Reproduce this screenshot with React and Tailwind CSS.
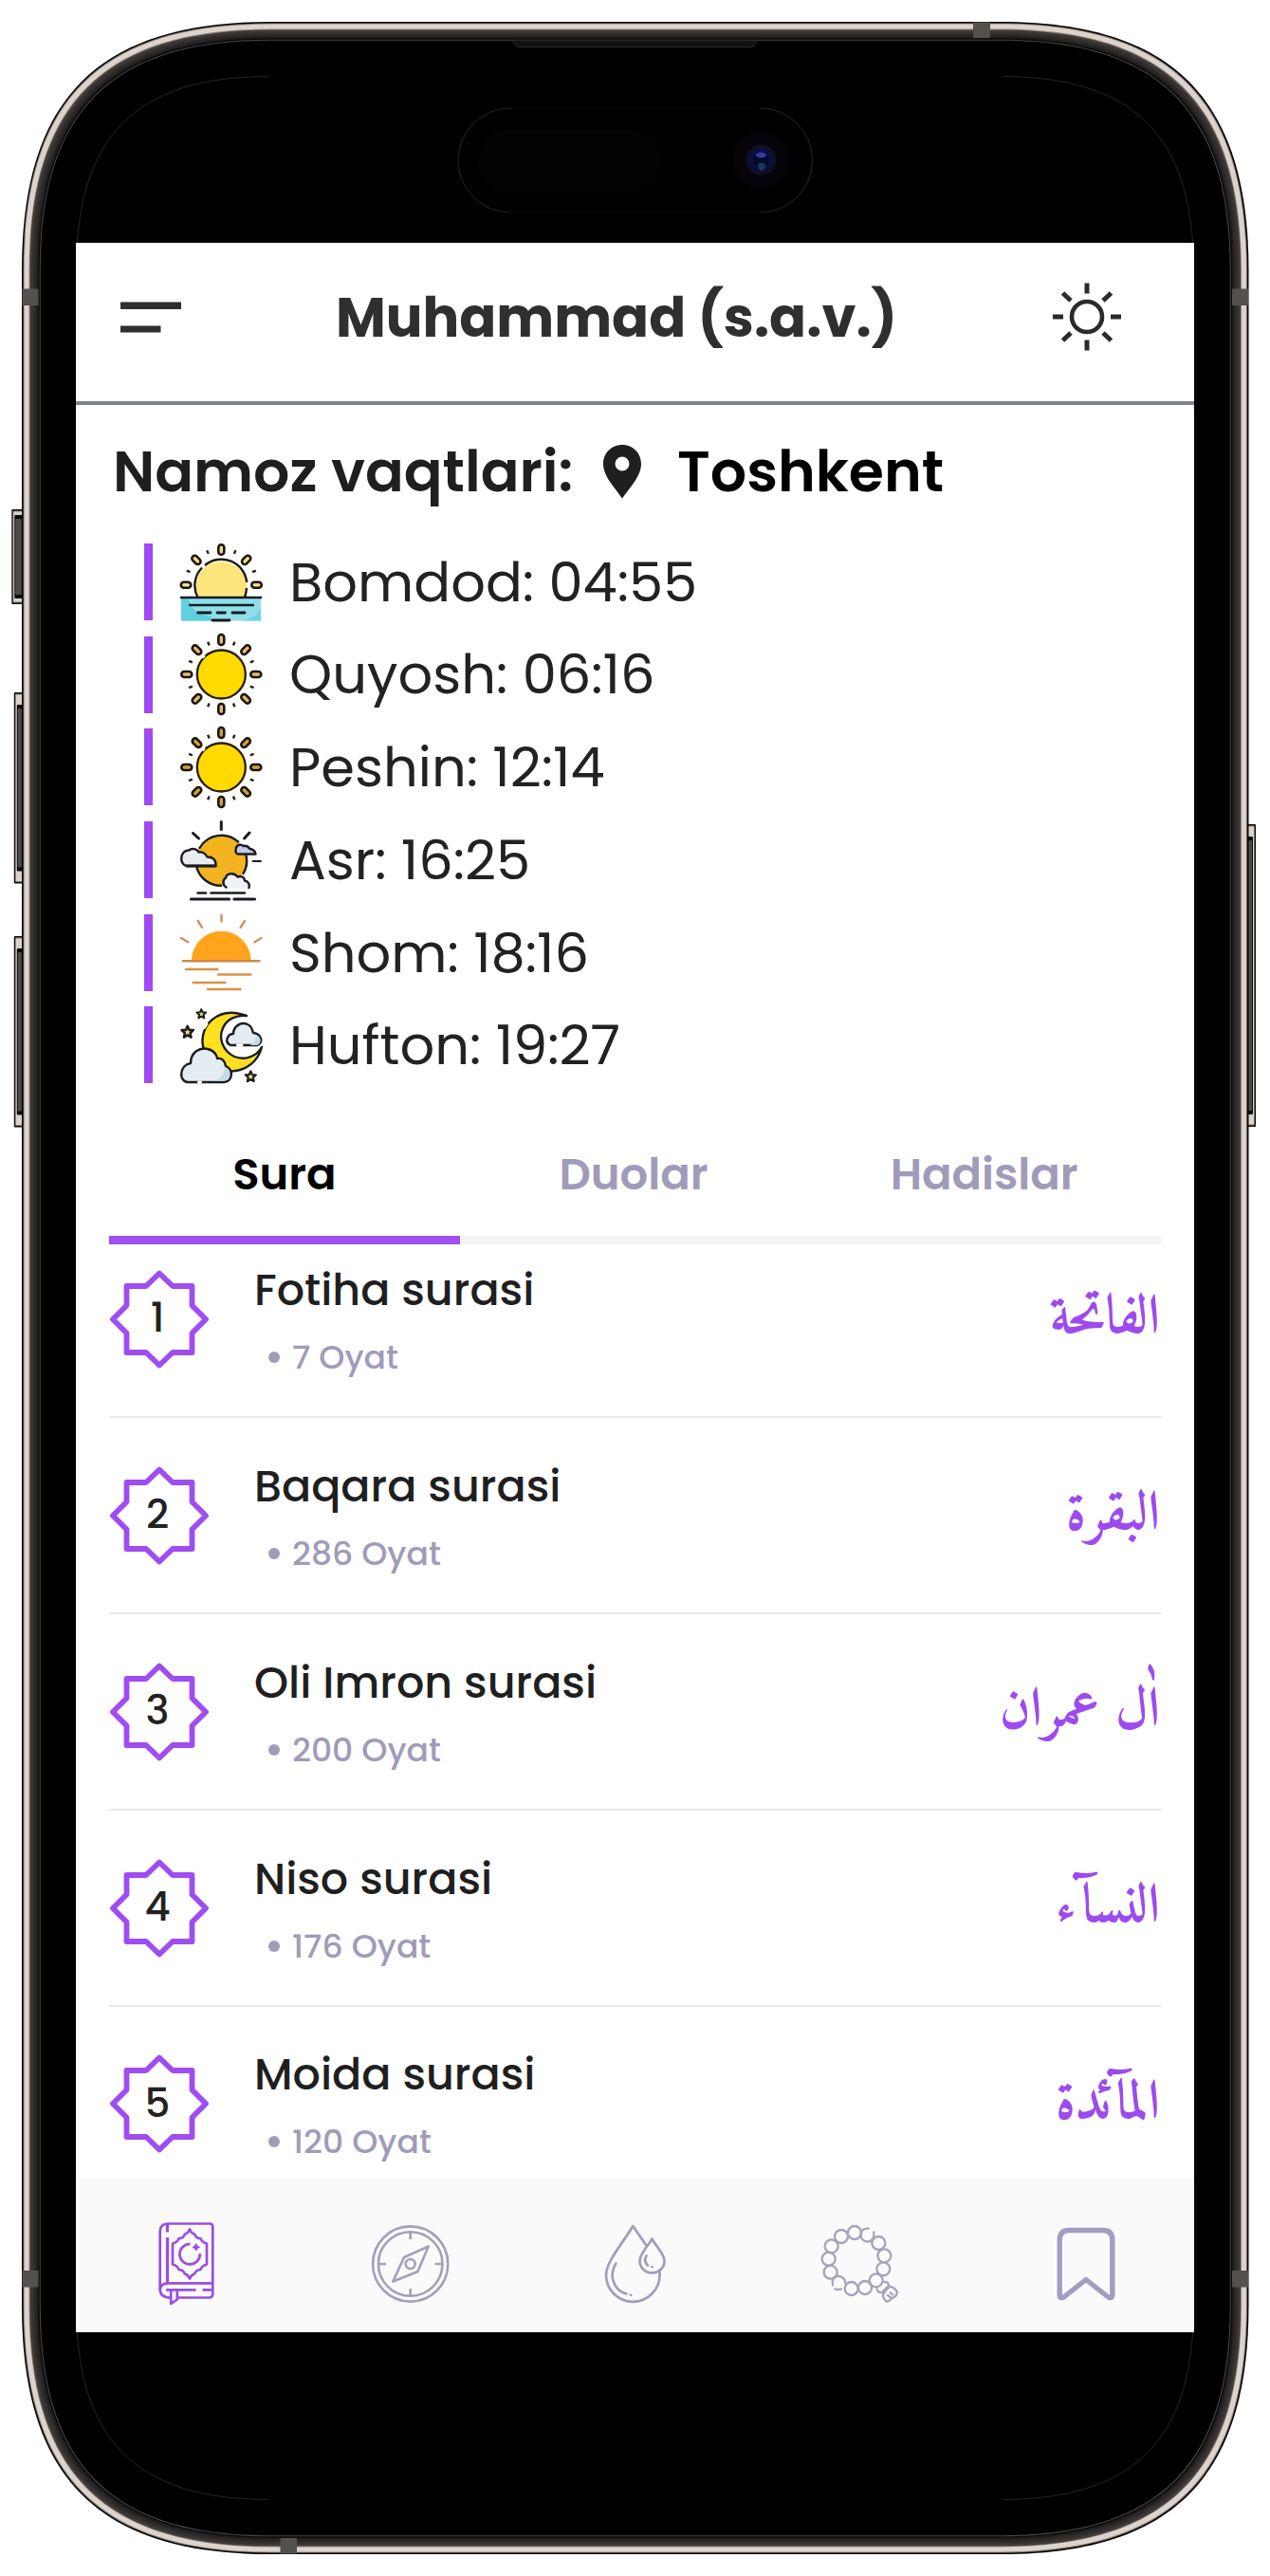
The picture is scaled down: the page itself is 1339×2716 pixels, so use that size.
import React from "react";

const PRAYERS = [
  { label: "Bomdod: 04:55", icon: "dawn" },
  { label: "Quyosh: 06:16", icon: "sun" },
  { label: "Peshin: 12:14", icon: "noon" },
  { label: "Asr: 16:25", icon: "cloudy" },
  { label: "Shom: 18:16", icon: "sunset" },
  { label: "Hufton: 19:27", icon: "night" },
];

const SURAS = [
  { n: 1, name: "Fotiha surasi", verses: "7 Oyat", arabic: "الفاتحة" },
  { n: 2, name: "Baqara surasi", verses: "286 Oyat", arabic: "البقرة" },
  { n: 3, name: "Oli Imron surasi", verses: "200 Oyat", arabic: "اٰل عمران" },
  { n: 4, name: "Niso surasi", verses: "176 Oyat", arabic: "النسآء" },
  { n: 5, name: "Moida surasi", verses: "120 Oyat", arabic: "المآئدة" },
];

/* Continuous-corner rectangle, as used for the device body. */
function squircle(x0, y0, x1, y1, r) {
  const a = r * 0.692;
  return [
    `M${x0 + r} ${y0}H${x1 - r}`,
    `c${a} 0 ${r} ${r - a} ${r} ${r}`,
    `V${y1 - r}`,
    `c0 ${a} ${a - r} ${r} ${-r} ${r}`,
    `H${x0 + r}`,
    `c${-a} 0 ${-r} ${a - r} ${-r} ${-r}`,
    `V${y0 + r}`,
    `c0 ${-a} ${r - a} ${-r} ${r} ${-r}z`,
  ].join("");
}
const body = (i) => squircle(23 + i, 23 + i, 1316.5 - i, 2693 - i, 262 - i);

function SideButton({ x, y, w, h, flip }) {
  const e = flip ? x + w : x;
  const s = flip ? -1 : 1;
  const r = (a, b, top, c) => (
    <rect x={Math.min(e + s * a, e + s * b)} y={y + top} width={b - a} height={h - top * 2} fill={c} rx="1" />
  );
  return (
    <g>
      {r(0, w, 0, "#0b0a0a")}
      {r(1.2, w, 1.5, "#8b8078")}
      {r(2, w, 2.5, "#dcd2ca")}
      {r(3, w, w > 10 ? 6 : 13, "#0a0909")}
      {r(4, w - 1, w > 10 ? 10 : 17, "#4f4b49")}
    </g>
  );
}

function PhoneFrame() {
  return (
    <svg className="absolute inset-0" width="1339" height="2716" viewBox="0 0 1339 2716" fill="none">
      <SideButton x={12.3} y={537} w={11.5} h={100} />
      <SideButton x={14.8} y={730} w={9} h={201.5} />
      <SideButton x={14.8} y={987} w={9} h={201.5} />
      <SideButton x={1315} y={869} w={9} h={319} flip />
      <path d={body(0)} fill="#050505" />
      <path d={body(1.6)} fill="#8a8079" />
      <path d={body(2.6)} fill="#dcd3cc" />
      <path d={body(7.6)} fill="#8f857d" />
      <path d={body(8.4)} fill="#423d3a" />
      <path d={body(10.5)} fill="#35312f" />
      <path d={body(13)} fill="#2b2827" />
      <path d={body(15.5)} fill="#1f1d1c" />
      <path d={body(17.5)} fill="#050505" />
      <path d={body(18.7)} fill="#474747" />
      <path d={body(19.8)} fill="#000" />
      <g fill="#53504e">
        <path d="M23.500 304.500h17v17.500h-17zM1299 304.500h17v17.500h-17z" />
        <path d="M23.500 2394h17v17.500h-17zM1299 2394h17v17.500h-17z" />
        <path d="M1026 23.500h18v16.500h-18zM295.500 2676h17.500v16.500h-17.500z" />
      </g>
      <path d="M541 42.500H798l-2 4q-1 3-4 3H547q-3 0-4-3z" fill="#111" stroke="#2b2b2b" strokeWidth="1" />
      <path d={squircle(80.5, 80.5, 1258.5, 2635.5, 204)} stroke="#363636" strokeWidth="0.700" />
      <path d="M282 78H1058V83H282zM282 2633H1058V2638H282z" fill="#000" />
      <path d="M540 114H538A55 55 0 0 0 538 224M801.500 114A55 55 0 0 1 801.500 224" stroke="#3a3a3a" strokeWidth="0.700" />
      <path d="M540 114H800M540 224H800" stroke="#0c0c0c" strokeWidth="0.700" />
      <rect x="503.500" y="136" width="194" height="66" rx="33" fill="#030303" />
      <circle cx="802.400" cy="168.600" r="30" fill="#060408" />
      <circle cx="802.400" cy="168.600" r="16" fill="#0e1124" />
      <circle cx="802.400" cy="168.600" r="12" fill="#0b0e4a" />
      <circle cx="802.400" cy="168.600" r="8.500" fill="#070a26" />
      <ellipse cx="802.400" cy="163.500" rx="5.500" ry="3" fill="#353a9c" />
      <ellipse cx="803" cy="175" rx="4" ry="3.200" fill="#0e4058" />
      <ellipse cx="803" cy="178.500" rx="2.500" ry="1.200" fill="#4c1a6a" />
    </svg>
  );
}

function MenuIcon() {
  return (
    <svg width="64" height="33" viewBox="0 0 64 33" fill="#2f2f2f">
      <rect y="0.500" width="64" height="7.500" />
      <rect y="25.500" width="42.500" height="7" />
    </svg>
  );
}

function ThemeIcon() {
  return (
    <svg width="74" height="74" viewBox="-37 -37 74 74" fill="none" stroke="#2b2b2b" strokeLinecap="round">
      <circle r="16" strokeWidth="4.600" />
      <path
        strokeWidth="5"
        strokeLinecap="butt"
        d="M0-35.500V-24.500M0 35.500V24.500M-36 0H-25M36 0H25M-25.500-25l8.500 8M25.500-25l-8.500 8M-25.500 25l8.500-8M25.500 25l-8.500-8"
      />
    </svg>
  );
}

function PinIcon() {
  return (
    <svg className="ml-[33px]" width="40" height="57" viewBox="0 0 40 57">
      <path
        fill="#1f1f1f"
        fillRule="evenodd"
        d="M20 0C9 0 0 8.500 0 20C0 33 12 45 20 56.500C28 45 40 33 40 20C40 8.500 31 0 20 0ZM20 12.500a7.500 7.500 0 0 1 0 15a7.500 7.500 0 0 1 0-15Z"
      />
    </svg>
  );
}

function Rays({ angles, from, to, fill }) {
  return angles.map((a) => (
    <rect
      key={a}
      x="-3"
      y={-to + 1}
      width="6"
      height={to - from - 2}
      rx="3"
      fill={fill}
      stroke="#1c1608"
      strokeWidth="2.600"
      transform={`rotate(${a})`}
    />
  ));
}

function Ticks({ angles, from, to }) {
  return angles.map((a) => (
    <path key={a} d={`M0 ${-from}V${-to}`} stroke="#26231a" strokeWidth="2.400" transform={`rotate(${a})`} />
  ));
}

function FullSun({ ray }) {
  return (
    <g transform="translate(43.300 43)">
      <circle r="25.500" fill="#ffda00" stroke="#2a1c0a" strokeWidth="2.300" />
      <path d="M-20-17.500l2.500-2.500" stroke="#fff" strokeWidth="2.500" />
      <Rays angles={[0, 45, 90, 135, 180, 225, 270, 315]} from={30} to={43} fill={ray} />
      <Ticks angles={[22.5, 67.5, 112.5, 157.5, 202.5, 247.5, 292.5, 337.5]} from={33} to={37} />
    </g>
  );
}

const STAR =
  "M0-6.500L1.900-2.200L6.500-2L3 1.300L4 6L0 3.600L-4 6L-3 1.300L-6.500-2L-1.900-2.200Z";

function PrayerIcon({ name }) {
  return (
    <svg className="ml-[29px] shrink-0 overflow-visible" width="86" height="86" viewBox="0 0 86 86" fill="none">
      {name === "dawn" && (
        <g>
          <path d="M1 59H85V83.500H1z" fill="#8fdfea" />
          <path d="M1 59H9C11 72 17 76 33 79V83.500H1z" fill="#5fd0e2" />
          <path d="M66 83.500Q80 80 85 70V83.500z" fill="#6cd6e6" />
          <path d="M18.500 59A27 27 0 1 1 68 59Z" fill="#fde57c" />
          <path d="M18.500 59A27 27 0 0 1 23 27.500M26 25A27 27 0 0 1 70.200 43M70 49Q69.500 55 68 59" stroke="#1b1b1b" strokeWidth="2.400" />
          <path d="M0 59H86M9 67H78" stroke="#141c20" strokeWidth="2.500" />
          <path d="M18.500 75H32M39 75H47.500M55 75H68M34 83H52" stroke="#141c20" strokeWidth="2.800" strokeLinecap="round" />
          <g transform="translate(43.300 45.700)">
            <Rays angles={[-90, -45, 0, 45, 90]} from={31} to={43.5} fill="#f0dd8a" />
            <Ticks angles={[-67.5, -22.5, 22.5, 67.5]} from={35.5} to={39.5} />
          </g>
        </g>
      )}
      {name === "sun" && <FullSun ray="#e3bd72" />}
      {name === "noon" && <FullSun ray="#cfa03c" />}
      {name === "cloudy" && (
        <g stroke="#191c22" strokeWidth="2.400" strokeLinecap="round" strokeLinejoin="round">
          <circle cx="43.300" cy="43.300" r="26.500" fill="#f2b41f" stroke="none" />
          <path d="M20.500 30A26.500 26.500 0 0 1 61 23.500M69.500 38A26.500 26.500 0 0 1 66.500 57M43 69.800A26.500 26.500 0 0 1 17 49" />
          <path d="M43.300 2.500V10.500M13.500 14.500L19.500 20M73 14L67.500 20" strokeWidth="3" />
          <path d="M76.500 44H85" strokeWidth="1.800" />
          <path d="M7 49H37.500C38 42 34 39.500 28.500 39.500C26 35 23.500 34 19.500 34.500C18 30.500 12 30 9 32.500C-1 33 -1 48 7 49Z" fill="#e9edf2" />
          <path d="M7 49H37" strokeWidth="3.200" />
          <path d="M61.500 36.500H79.500C79 32.500 76.500 31.500 73.500 31C71 27.500 68.500 27.500 66.500 28C63 25 58.500 27.500 58.800 31.500C57.500 34.500 59.500 36.500 61.500 36.500Z" fill="#c3c9e6" />
          <path d="M50 72.500C45 70 44 64 48 61.500C49 56.500 57 55.500 60.500 60.500C65 59 68 61.500 68 64.500C73 65.500 75 70 72 73Z" fill="#eef1f6" stroke="none" />
          <path d="M48.500 71.500C44.500 69 44.500 64 48 61.500C49 56.500 57 55.500 60.500 60.500C65 59 68 61.500 68 64.500C72 65.500 73.500 68.500 72.500 72" />
          <path d="M18.500 77.500H27M32.500 77.500H68" strokeWidth="2.600" />
          <path d="M11.500 84H51.500M57 84H78.500" strokeWidth="3.200" />
        </g>
      )}
      {name === "sunset" && (
        <g stroke="#dc9147" strokeWidth="2.400" strokeLinecap="round">
          <path d="M12 52A31.300 31.300 0 0 1 74.600 52Z" fill="#ffa41c" stroke="none" />
          <path d="M3 52.300H83.500" stroke="#c98a4a" />
          <path d="M6 61H39.500M40 66.500H74.500M13.500 75H47.500M29 82H63.500" />
          <path d="M43.500 4V10.500M18.800 10L23 16.800M68 10L63.500 16.800M1 28L8.200 32.300M85.500 28L78.500 32.300" stroke="#cf9255" />
        </g>
      )}
      {name === "night" && (
        <g stroke="#1a1c20" strokeWidth="2.400" strokeLinecap="round" strokeLinejoin="round">
          <path d="M70 12C40 1 20 22 24 44C27 62 40 71 54 70.500C70 70 82 60 86 45C79 57 66 58.500 57 55C45 49 40 36 45 25C49 15 60 11 70 12Z" fill="#ffe020" />
          <path d="M25.500 24.500l2.500-4" stroke="#fff" strokeWidth="3" />
          <path d="M53 43C46 40 50 31 56 31C56 23 64 18 71 21C76 23 76 28 77 30C86 31 88 41 81 43Z" fill="#e2ecf1" />
          <path d="M73 43C78 41 80 37 80 32C86 34 86 42 81 43Z" fill="#c4dae6" stroke="none" />
          <path d="M60.500 43H65" stroke="#fff" strokeWidth="3" />
          <path d="M8 82C-2 81 -1 64 11 62C11 50 21 45 29 47C37 49 39 55 39 57C45 56 47 60 48 65C57 69 55 82 46 82Z" fill="#e4edf2" />
          <path d="M36 80.500C44 78 47 72 47 66C54 70 54 80 46 80.500Z" fill="#c4dae6" stroke="none" />
          <path d="M19.500 82H21.500" stroke="#fff" strokeWidth="3.200" />
          <g fill="#f3d878" strokeWidth="2.600">
            <path d={STAR} transform="translate(22.300 10) scale(.75)" />
            <path d={STAR} transform="translate(7.700 29) scale(.95)" />
            <path d={STAR} transform="translate(74.300 76) scale(.85)" />
          </g>
        </g>
      )}
    </svg>
  );
}

function StarBadge({ n }) {
  return (
    <div className="grid h-[106px] w-[106px] shrink-0 place-items-center">
      <svg className="col-start-1 row-start-1" width="106" height="106" viewBox="-53 -53 106 106" fill="none">
        <path
          d="M0-48.500L14-35H34.500V-14.500L49 0L34.500 14.500V35H14L0 48.500L-14 35H-34.500V14.500L-49 0L-34.500-14.500V-35H-14Z"
          stroke="#a04df0"
          strokeWidth="5.800"
          strokeLinejoin="round"
        />
      </svg>
      <span className="col-start-1 row-start-1 -mt-[1px] -ml-[4px] text-[42px] leading-none font-medium text-[#222]">{n}</span>
    </div>
  );
}

function BookIcon() {
  return (
    <svg width="88" height="88" viewBox="0 0 88 88" fill="none" stroke="#9a4fe2" strokeWidth="2.700" strokeLinejoin="round">
      <path d="M35 79.500H68Q72.300 79.500 72.300 75.500V5Q72.300 1.500 69 1.500H25Q16.700 2 16.700 10V71Q17 79.500 28 79.500" />
      <path d="M24.500 1.500V10.500M24.500 16V64" strokeWidth="3.200" />
      <path d="M72 64.300H25Q17 64.500 16.700 71.500M23 71.300H54.500M61.500 71.300H72" />
      <path d="M28.200 71.500V86L34.800 81.500V71.500" />
      <path d="M48 7.500Q49.500 11.500 53 12.500Q55 17.500 59.500 17Q60.500 21 66 22.500V44.500Q60.500 46 59.500 50Q55 50 53 54.500Q49.500 55.500 48 59.500Q46.500 55.500 43 54.500Q41 50 36.500 50Q35.500 46 30 44.500V22.500Q35.500 21 36.500 17Q41 17.500 43 12.500Q46.500 11.500 48 7.500Z" />
      <path d="M48.500 23A10.700 10.700 0 1 0 58.800 33" />
      <path d="M54.700 22.500L56 25L58.500 26.300L56 27.600L54.700 30L53.400 27.600L51 26.300L53.400 25Z" fill="#9a4fe2" strokeWidth="1" />
    </svg>
  );
}

function CompassIcon() {
  return (
    <svg width="88" height="88" viewBox="0 0 88 88" fill="none" stroke="#a3a0bb" strokeWidth="2.600" strokeLinejoin="round">
      <circle cx="43.700" cy="44" r="39.600" />
      <circle cx="43.700" cy="44" r="33.800" />
      <path d="M43.700 10V18M43.700 78V70M10 44H18M77.500 44H69.500" />
      <path d="M62.700 25.500L37 37L25.300 62.500L51.500 52Z" />
      <circle cx="43.700" cy="44" r="5" />
    </svg>
  );
}

function DropIcon() {
  return (
    <svg width="88" height="88" viewBox="0 0 88 88" fill="none" stroke="#a19dbd" strokeWidth="2.700" strokeLinejoin="round" strokeLinecap="round">
      <path d="M54.500 24.500L40.300 4C32 19 12 41 12 55.500A28.300 28.300 0 0 0 68.600 55.500V51" />
      <path d="M60.300 17.500C56 26 47.500 33 47.500 41A13 12.300 0 0 0 73.500 41C73.500 33 65 26 60.300 17.500Z" />
      <path d="M22.300 43.500C13 59 23 73 33.500 75.500M38 76.800h.1M54.500 35.500C51 41 55 44.500 56 45.500M60.500 47h.1" />
    </svg>
  );
}

const BEADS = [
  [813, 72], [771, 84], [740, 115], [731, 155], [737, 197], [803, 249],
  [846, 246], [881, 223], [904, 187], [907, 145], [889, 105],
];

function BeadsIcon() {
  return (
    <svg width="88" height="88" viewBox="702 39 264 264" fill="none" stroke="#a6a3ba" strokeWidth="7" strokeLinecap="round" strokeLinejoin="round">
      {BEADS.map(([x, y]) => (
        <circle key={x} cx={x} cy={y} r="21" />
      ))}
      <path d="M857 59Q836 57 832 78Q834 100 855 101Q877 97 874 70" />
      <path d="M771 250Q756 254 752 250M744 238Q738 214 760 209Q784 213 784 232" />
      <path d="M908 228Q922 228 920 240L900 261Q886 262 884 250" />
      <path d="M925 242Q912 250 904 266Q900 278 914 290Q926 288 931 279Q945 276 948 260Q940 246 925 242ZM926 262L934 268M918 270L926 276" />
    </svg>
  );
}

function BookmarkIcon() {
  return (
    <svg width="88" height="88" viewBox="0 0 88 88" fill="none" stroke="#a39dc2" strokeWidth="5.400" strokeLinejoin="round">
      <path d="M16.200 77V19Q16.200 8.500 26 8.500H62Q71.800 8.500 71.800 19V77Q71.500 81 67.500 79L44 60.500L20.500 79Q16.500 81 16.200 77Z" />
    </svg>
  );
}

function Header() {
  return (
    <header className="flex h-[171px] items-center border-b-4 border-[#80858c] pr-[76px] pb-[11px] pl-[47px]">
      <MenuIcon />
      <h1 className="ml-[163px] pt-[3px] text-[57.5px] leading-none font-bold whitespace-nowrap text-[#2f2f2f]">Muhammad (s.a.v.)</h1>
      <div className="ml-auto">
        <ThemeIcon />
      </div>
    </header>
  );
}

function PrayerTimes() {
  return (
    <section className="pt-[30px]">
      <div className="flex h-[80px] items-center pl-[39px] text-[60.2px] leading-none font-semibold whitespace-nowrap">
        <h2 className="w-[484px] text-[#1f1f1f]">Namoz vaqtlari:</h2>
        <PinIcon />
        <span className="ml-[38px] text-black">Toshkent</span>
      </div>
      <ul className="mt-[36px] flex flex-col gap-[16.7px] pl-[72px]">
        {PRAYERS.map((p) => (
          <li key={p.icon} className="flex h-[81px] items-center">
            <span className="h-full w-[9px] bg-[#a04af5]" />
            <PrayerIcon name={p.icon} />
            <span className="ml-[29px] pt-[2px] text-[57.5px] leading-none whitespace-nowrap text-[#222]">{p.label}</span>
          </li>
        ))}
      </ul>
    </section>
  );
}

function Tabs() {
  const tab = "flex h-[123px] items-center justify-center border-b-[9px] pb-[16px]";
  return (
    <nav className="mx-[35px] mt-[47px] grid grid-cols-3 text-[46.5px] leading-none font-semibold">
      <span className={tab + " border-[#a04ff0] text-black"}>Sura</span>
      <span className={tab + " border-[#f4f4f4] pr-[3px] text-[#a09bb9]"}>Duolar</span>
      <span className={tab + " border-[#f4f4f4] pr-[3px] text-[#a09bb9]"}>Hadislar</span>
    </nav>
  );
}

function SuraList() {
  return (
    <ul className="mx-[35px] -mt-[24px] h-[1012px] overflow-hidden">
      {SURAS.map((s) => (
        <li key={s.n} className="flex h-[206.9px] items-center border-b-[2px] border-[#e9e9e9]">
          <StarBadge n={s.n} />
          <div className="ml-[47px] pt-[10px]">
            <h3 className="text-[46px] leading-[70px] font-medium whitespace-nowrap text-[#1f1f1f]">{s.name}</h3>
            <p className="flex items-center gap-[13px] pl-[15px] text-[34.6px] leading-[72px] font-medium text-[#a09bb9]">
              <span className="h-[12px] w-[12px] rounded-full bg-[#a09bb9]" />
              {s.verses}
            </p>
          </div>
          <span dir="rtl" className="mr-[1px] ml-auto font-['Amiri'] text-[57.5px] leading-none font-bold whitespace-nowrap text-[#9d4bef]">
            {s.arabic}
          </span>
        </li>
      ))}
    </ul>
  );
}

function BottomNav() {
  return (
    <nav className="flex h-[159px] items-start justify-between bg-[#fafafa] pt-[43px] pr-[70px] pl-[72px] shadow-[0_-1px_4px_rgba(0,0,0,0.04)]">
      <BookIcon />
      <CompassIcon />
      <DropIcon />
      <BeadsIcon />
      <BookmarkIcon />
    </nav>
  );
}

export default function App() {
  return (
    <div className="relative h-[2716px] w-[1339px] overflow-hidden bg-white pt-[256px] pl-[80px] font-['Poppins','Inter',sans-serif]">
      <PhoneFrame />
      <main className="relative h-[2203px] w-[1179px] overflow-hidden bg-white">
        <Header />
        <PrayerTimes />
        <Tabs />
        <SuraList />
        <BottomNav />
      </main>
    </div>
  );
}
